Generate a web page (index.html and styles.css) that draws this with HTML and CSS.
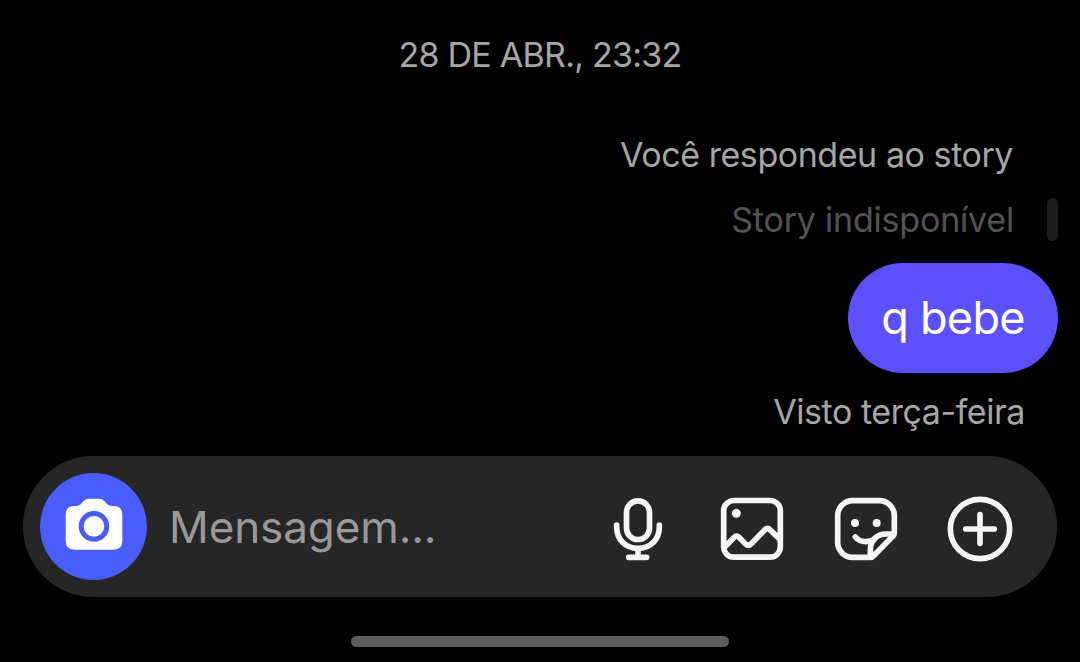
FILE: index.html
```html
<!DOCTYPE html>
<html lang="pt-BR">
<head>
<meta charset="utf-8">
<title>Mensagens</title>
<link rel="stylesheet" href="styles.css">
</head>
<body>
<main class="chat">
  <time class="date">28 DE ABR., 23:32</time>
  <section class="thread">
    <p class="note reply">Você respondeu ao story</p>
    <div class="story"><p class="note unavailable">Story indisponível</p><span class="quote-bar"></span></div>
    <p class="bubble"><span class="bubble-text">q bebe</span></p>
    <p class="note seen">Visto terça-feira</p>
  </section>
  <footer class="composer">
    <svg class="camera" viewBox="90 69 321 321">
      <circle cx="250.500" cy="229.500" r="160.500" fill="#4a5dfb"/>
      <path fill="#fff" d="M167 194Q167 168 193 168H197Q207 168 214 161L221 153Q228 146 238 146H266Q276 146 283 153L290 161Q297 168 307 168H311Q337 168 337 194V273Q337 299 311 299H193Q167 299 167 273Z"/>
      <circle cx="252" cy="229" r="38.500" fill="none" stroke="#4a5dfb" stroke-width="15"/>
    </svg>
    <span class="placeholder">Mensagem...</span>
    <div class="actions">
      <svg class="icon" viewBox="9 27 210 210">
        <rect x="79.500" y="47.500" width="69" height="116" rx="34.500"/>
        <path d="M50 120V126C50 163 76 190 114 190S178 163 178 126V120M114 190V217M86 217H140"/>
      </svg>
      <svg class="icon" viewBox="36 27 210 210">
        <rect x="56" y="46.500" width="170" height="170" rx="31"/>
        <circle class="dot" cx="94" cy="85" r="13.500"/>
        <path d="M58 187L88 157Q95 149 102 157L122 177Q130 185 138 177L179 135Q187 126 195 134L224 162"/>
      </svg>
      <svg class="icon" viewBox="33 27 210 210">
        <path d="M151 217H98A45 45 0 0 1 53 172V92A45 45 0 0 1 98 47H178A45 45 0 0 1 223 92V144Q223 149 219 153L161 212Q157 217 151 217V195C151 166 170 147 199 147H221"/>
        <circle class="dot" cx="105" cy="114" r="12"/>
        <circle class="dot" cx="170" cy="114" r="12"/>
        <path d="M106 156Q118 170 137 170Q149 170 162 164"/>
      </svg>
      <svg class="icon" viewBox="45 132 210 210">
        <circle cx="150" cy="237" r="89"/>
        <path d="M107 237H193M150 194V280"/>
      </svg>
    </div>
  </footer>
  <div class="home-bar"></div>
</main>
</body>
</html>
```
FILE: styles.css
```css
* { box-sizing: border-box; }
body { margin: 0; background: #000; font-family: Inter, "Liberation Sans", sans-serif; font-weight: 400; }
p { margin: 0; }
.chat { width: 1080px; height: 662px; overflow: hidden; display: flex; flex-direction: column; align-items: center; background: #000; }
.date { margin-top: 35px; font-size: 34px; line-height: 40px; letter-spacing: -0.75px; color: #a6a6a6; white-space: nowrap; }
.thread { width: 100%; display: flex; flex-direction: column; align-items: flex-end; padding: 60px 22px 0 0; }
.note { font-size: 34px; line-height: 40px; letter-spacing: -0.44px; color: #a6a6a6; white-space: nowrap; }
.reply { margin-right: 45px; }
.story { display: flex; align-items: center; gap: 33px; margin-top: 23px; height: 43px; }
.unavailable { letter-spacing: -0.2px; color: #535353; }
.quote-bar { width: 11px; height: 43px; border-radius: 5.5px; background: #1c1c1c; }
.bubble { width: 210px; height: 110px; margin-top: 22px; border-radius: 55px; background: #5b50fa; color: #fff; display: flex; align-items: center; justify-content: center; }
.bubble-text { font-size: 45px; line-height: 52px; letter-spacing: -0.7px; white-space: nowrap; }
.seen { margin: 19px 33px 0 0; }
.composer { width: 1034px; height: 141px; margin-top: 24px; border-radius: 70.5px; background: #262626; display: flex; align-items: center; padding: 0 42px 0 17px; flex-shrink: 0; }
.camera { width: 107px; height: 107px; flex-shrink: 0; }
.placeholder { margin-left: 22px; font-size: 44px; line-height: 52px; letter-spacing: -0.1px; color: #999; }
.actions { margin: 5px 0 0 auto; display: flex; gap: 44px; }
.icon { width: 70px; height: 70px; fill: none; stroke: #f5f5f5; stroke-width: 17; stroke-linecap: round; stroke-linejoin: round; }
.dot { fill: #f5f5f5; stroke: none; }
.home-bar { width: 378px; height: 11px; margin-top: 39px; border-radius: 5.5px; background: #5d5d5d; flex-shrink: 0; }
```
